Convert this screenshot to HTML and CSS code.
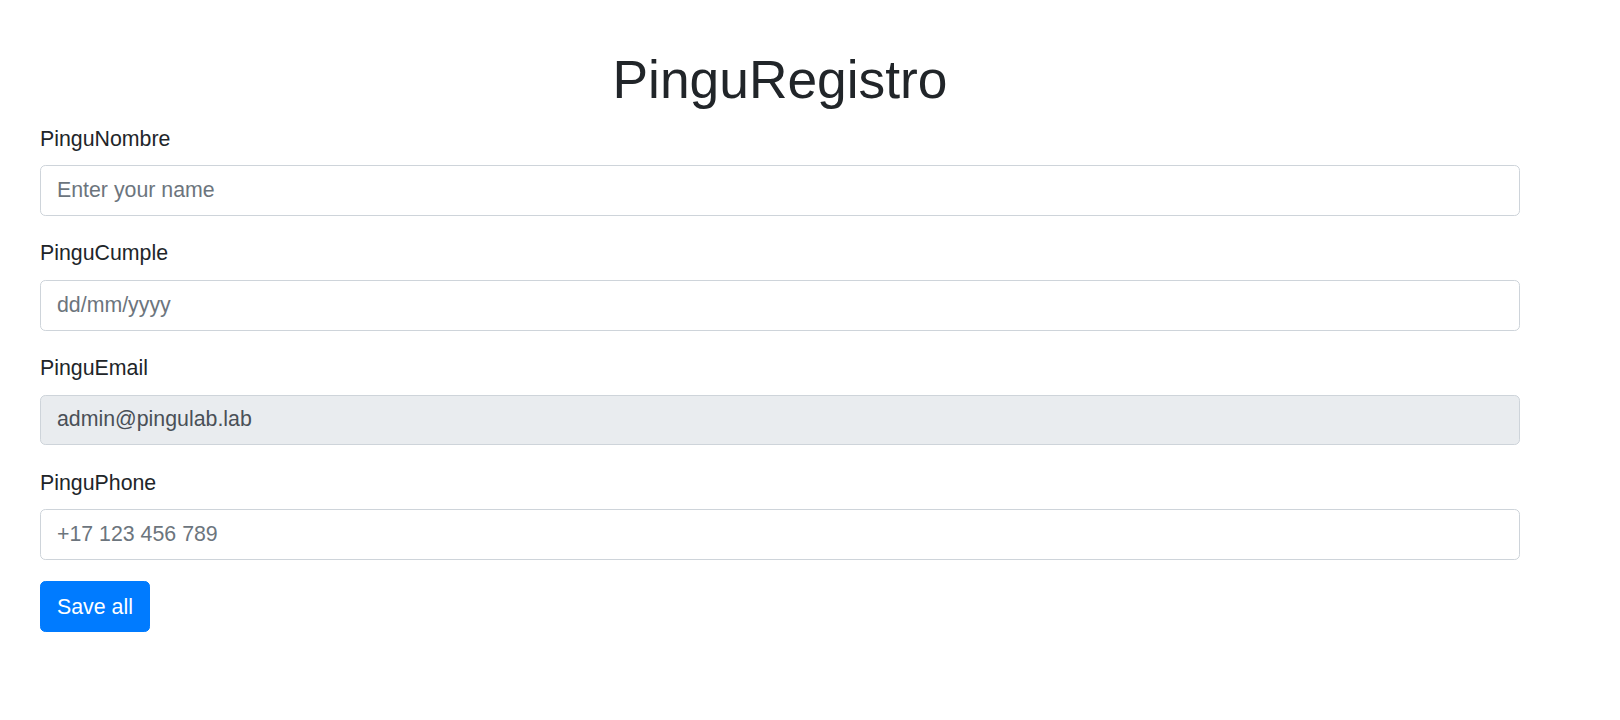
FILE: index.html
```html
<!DOCTYPE html>
<html lang="es">
<head>
<meta charset="utf-8">
<title>PinguRegistro</title>
<link rel="stylesheet" href="styles.css">
</head>
<body>
<main class="page">
  <h1 class="title">PinguRegistro</h1>
  <form class="form">
    <div class="form-group">
      <label class="label" for="nombre">PinguNombre</label>
      <input class="control" id="nombre" type="text" placeholder="Enter your name">
    </div>
    <div class="form-group">
      <label class="label" for="cumple">PinguCumple</label>
      <input class="control" id="cumple" type="text" placeholder="dd/mm/yyyy">
    </div>
    <div class="form-group">
      <label class="label" for="email">PinguEmail</label>
      <input class="control control-readonly" id="email" type="email" value="admin@pingulab.lab" readonly>
    </div>
    <div class="form-group">
      <label class="label" for="phone">PinguPhone</label>
      <input class="control" id="phone" type="tel" placeholder="+17 123 456 789">
    </div>
    <button class="btn-primary" type="button">Save all</button>
  </form>
</main>
</body>
</html>
```

FILE: styles.css
```css
* {
  box-sizing: border-box;
}

html, body {
  margin: 0;
  padding: 0;
  background: #fff;
}

body {
  font-family: "Liberation Sans", Arial, sans-serif;
  font-size: 21.333px;
  line-height: 32px;
  color: #212529;
}

.page {
  width: 1480px;
  margin-left: 40px;
  padding-top: 48px;
}

.title {
  margin: 0 0 10.667px 0;
  font-size: 53.333px;
  line-height: 64px;
  font-weight: 400;
  text-align: center;
  color: #212529;
}

.form {
  display: flex;
  flex-direction: column;
  align-items: flex-start;
}

.form-group {
  width: 100%;
  margin-bottom: 21.333px;
}

.label {
  display: inline-block;
  margin-bottom: 10.667px;
  font-size: 21.333px;
  line-height: 32px;
}

.control {
  display: block;
  width: 100%;
  height: 50.667px;
  padding: 8.333px 16px;
  font-family: "Liberation Sans", Arial, sans-serif;
  font-size: 21.333px;
  line-height: 32px;
  color: #495057;
  background: #fff;
  border: 1px solid #ced4da;
  border-radius: 5.333px;
  outline: none;
}

.control::placeholder {
  color: #6c757d;
  opacity: 1;
}

.control-readonly {
  background: #e9ecef;
}

.btn-primary {
  display: inline-block;
  padding: 8.333px 16px;
  font-family: "Liberation Sans", Arial, sans-serif;
  font-size: 21.333px;
  line-height: 32px;
  color: #fff;
  background: #007bff;
  border: 1px solid #007bff;
  border-radius: 5.333px;
  cursor: pointer;
}
```
